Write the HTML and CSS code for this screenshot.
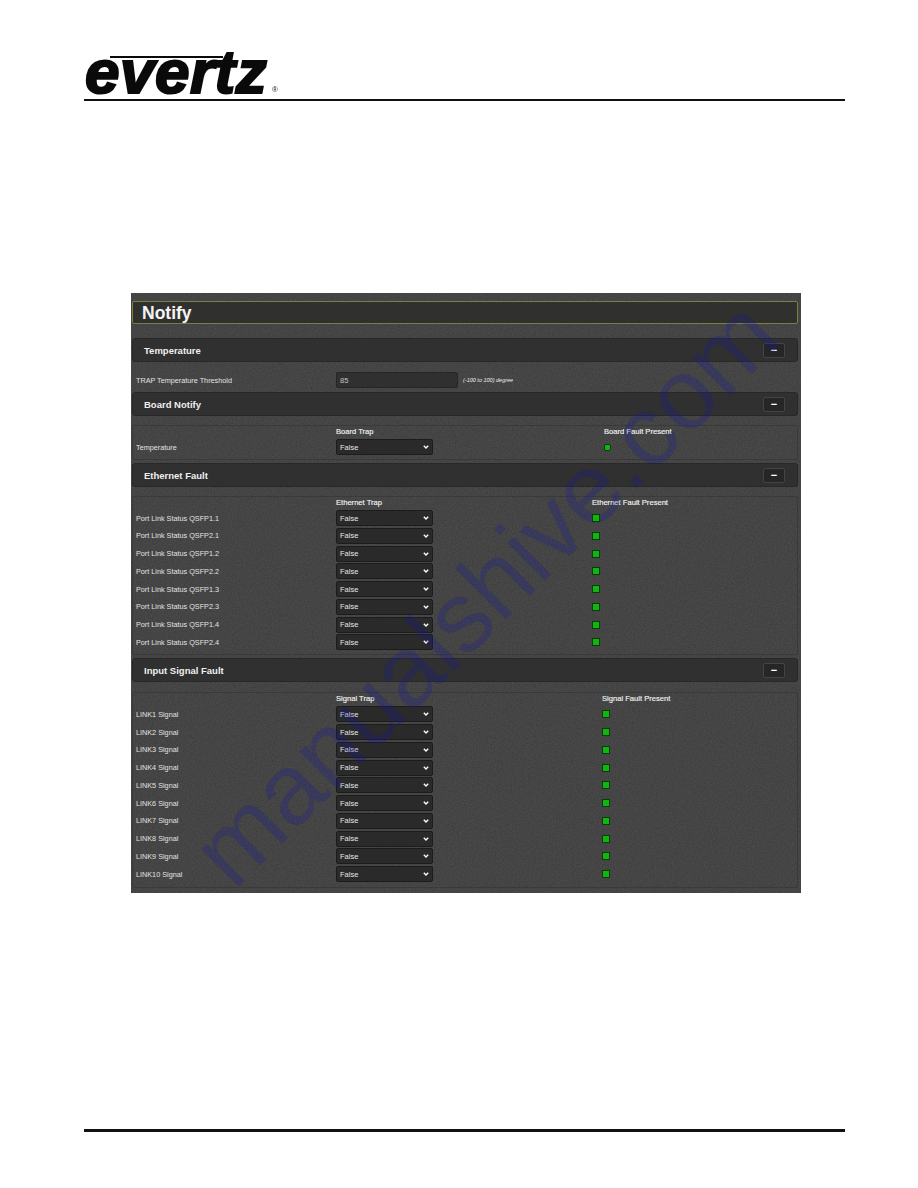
FILE: index.html
```html
<!DOCTYPE html>
<html>
	<head>
		<meta charset="UTF-8">
		<title>Notify</title>
		<link rel="stylesheet" href="styles.css">
	</head>

	<body>
		<div class="page">
			<div class="logo"><span class="logoWord">evertz</span><span class="logoMark">®</span></div>
			<div class="rule"></div>

			<div class="panel">
				<h1 class="title">Notify</h1>

				<div class="secHead first"><span>Temperature</span><span class="minus">−</span></div>
				<div class="tempRow">
					<label>TRAP Temperature Threshold</label>
					<input class="field" type="text" value="85">
					<em>(-100 to 100) degree</em>
				</div>

				<div class="secHead tight"><span>Board Notify</span><span class="minus">−</span></div>
				<div class="box board">
					<b></b><b>Board Trap</b><b>Board Fault Present</b>
					<label>Temperature</label><select><option>False</option></select><i class="led round"></i>
				</div>

				<div class="secHead tight"><span>Ethernet Fault</span><span class="minus">−</span></div>
				<div class="box ether">
					<b></b><b>Ethernet Trap</b><b>Ethernet Fault Present</b>
					<label>Port Link Status QSFP1.1</label><select><option>False</option></select><i class="led"></i>
					<label>Port Link Status QSFP2.1</label><select><option>False</option></select><i class="led"></i>
					<label>Port Link Status QSFP1.2</label><select><option>False</option></select><i class="led"></i>
					<label>Port Link Status QSFP2.2</label><select><option>False</option></select><i class="led"></i>
					<label>Port Link Status QSFP1.3</label><select><option>False</option></select><i class="led"></i>
					<label>Port Link Status QSFP2.3</label><select><option>False</option></select><i class="led"></i>
					<label>Port Link Status QSFP1.4</label><select><option>False</option></select><i class="led"></i>
					<label>Port Link Status QSFP2.4</label><select><option>False</option></select><i class="led"></i>
				</div>

				<div class="secHead tight"><span>Input Signal Fault</span><span class="minus">−</span></div>
				<div class="box signal">
					<b></b><b>Signal Trap</b><b>Signal Fault Present</b>
					<label>LINK1 Signal</label><select><option>False</option></select><i class="led"></i>
					<label>LINK2 Signal</label><select><option>False</option></select><i class="led"></i>
					<label>LINK3 Signal</label><select><option>False</option></select><i class="led"></i>
					<label>LINK4 Signal</label><select><option>False</option></select><i class="led"></i>
					<label>LINK5 Signal</label><select><option>False</option></select><i class="led"></i>
					<label>LINK6 Signal</label><select><option>False</option></select><i class="led"></i>
					<label>LINK7 Signal</label><select><option>False</option></select><i class="led"></i>
					<label>LINK8 Signal</label><select><option>False</option></select><i class="led"></i>
					<label>LINK9 Signal</label><select><option>False</option></select><i class="led"></i>
					<label>LINK10 Signal</label><select><option>False</option></select><i class="led"></i>
				</div>

				<div class="watermark">manualshive.com</div>
			</div>

			<div class="rule bottom"></div>
		</div>
	</body>
</html>
```

FILE: styles.css
```css
*{
	margin: 0;
	padding: 0;
	box-sizing: border-box;
}
html, body{
	background: white;
}
body{
	font-family: "Liberation Sans", Arial, sans-serif;
	overflow: hidden;
}
.page{
	width: 918px;
	height: 1188px;
	padding: 0 73px 0 84px;
}

/* logo */
.logo{
	height: 99px;
	position: relative;
	filter: blur(.4px);
}
.logo:before{
	content: "";
	position: absolute;
	left: 26px;
	top: 56px;
	width: 113px;
	height: 2px;
	background: #0a0a0a;
}
.logoWord{
	position: absolute;
	left: 1px;
	top: 44px;
	height: 55px;
	font-size: 62px;
	line-height: 55px;
	font-weight: bold;
	font-style: italic;
	letter-spacing: .5px;
	color: #0a0a0a;
	-webkit-text-stroke: 2.2px #0a0a0a;
}
.logoMark{
	position: absolute;
	left: 188px;
	top: 85px;
	font-size: 8px;
	line-height: 10px;
	color: #222;
}
.rule{
	height: 2px;
	background: #111;
}
.rule.bottom{
	height: 3px;
	margin-top: 236px;
}

/* main panel */
.panel{
	width: 670px;
	height: 600px;
	margin: 192px 0 0 47px;
	padding: 8px 3px 0 1px;
	position: relative;
	filter: blur(.45px);
	color: #e2e2e2;
	font-size: 7.25px;
	background-color: #4a4a4a;
	background-image: url("data:image/svg+xml,%3Csvg xmlns='http://www.w3.org/2000/svg' width='300' height='300'%3E%3Cfilter id='n'%3E%3CfeTurbulence type='fractalNoise' baseFrequency='.7' numOctaves='2'/%3E%3CfeColorMatrix values='0 0 0 0 0 0 0 0 0 0 0 0 0 0 0 0 0 0 .3 -.08'/%3E%3C/filter%3E%3Crect width='300' height='300' filter='url(%23n)'/%3E%3C/svg%3E");
}
.title{
	height: 23px;
	padding-left: 9px;
	line-height: 22px;
	font-size: 17.5px;
	font-weight: bold;
	color: #f4f4f4;
	background: #30302e;
	border: 1px solid #7d7f3a;
	border-radius: 2px;
}
.secHead{
	height: 24px;
	padding: 0 12px 0 11px;
	display: flex;
	align-items: center;
	justify-content: space-between;
	font-size: 9.5px;
	font-weight: bold;
	color: #efefef;
	background: #303030;
	border: 1px solid #282828;
	border-radius: 3px;
}
.secHead.first{
	margin-top: 14px;
}
.secHead.tight{
	margin-top: 3px;
}
.minus{
	width: 22px;
	height: 15px;
	line-height: 13px;
	text-align: center;
	font-size: 11px;
	font-weight: bold;
	color: white;
	background: #262626;
	border: 1px solid #444;
	border-radius: 2px;
}

/* temperature row */
.tempRow{
	height: 16px;
	margin: 10px 0 4px;
	padding-left: 4px;
	display: grid;
	grid-template-columns: 200px 127px 1fr;
	align-items: center;
}
.tempRow em{
	font-size: 5.5px;
	font-style: italic;
	color: #eee;
}
.field{
	width: 122px;
	height: 16px;
	padding-left: 3px;
	font: 7.5px "Liberation Sans", Arial, sans-serif;
	color: #c4c4c4;
	background: #303030;
	border: 1px solid #262626;
	border-radius: 2px;
}

/* groups */
.box{
	display: grid;
	align-items: center;
	row-gap: 1.75px;
	margin-top: 9px;
	padding: 0 0 4px 3px;
	border: 1px solid #3a3a3a;
	border-radius: 2px;
}
.box.board{
	grid-template-columns: 200px 268px 1fr;
}
.box.ether{
	grid-template-columns: 200px 256px 1fr;
}
.box.signal{
	grid-template-columns: 200px 266px 1fr;
	margin-top: 10px;
	padding-bottom: 5px;
}
.box b{
	height: 11.25px;
	line-height: 11px;
	font-size: 7.6px;
	font-weight: normal;
	color: #f2f2f2;
	-webkit-text-stroke: .15px #f2f2f2;
}
.box select{
	width: 97px;
	height: 16px;
	padding-left: 3px;
	font: 7.5px "Liberation Sans", Arial, sans-serif;
	color: #e8e8e8;
	border: 1px solid #1c1c1c;
	border-radius: 2px;
	appearance: none;
	-webkit-appearance: none;
	background: #2a2a2a url("data:image/svg+xml,%3Csvg xmlns='http://www.w3.org/2000/svg' width='6' height='4'%3E%3Cpath d='M.8.8 3 3l2.2-2.2' fill='none' stroke='white' stroke-width='1.4'/%3E%3C/svg%3E") no-repeat right 3px center;
}
.led{
	display: block;
	position: relative;
	z-index: 1;
	width: 8px;
	height: 8px;
	background: #10b510;
	border: 1px solid #0c3a0c;
}
.led.round{
	width: 7px;
	height: 7px;
	border-radius: 2px;
}

.watermark{
	position: absolute;
	left: -36px;
	top: 244px;
	width: max-content;
	font-size: 100px;
	line-height: 110px;
	white-space: nowrap;
	color: rgba(20, 20, 165, .24);
	transform: rotate(-45deg);
	pointer-events: none;
}
```
